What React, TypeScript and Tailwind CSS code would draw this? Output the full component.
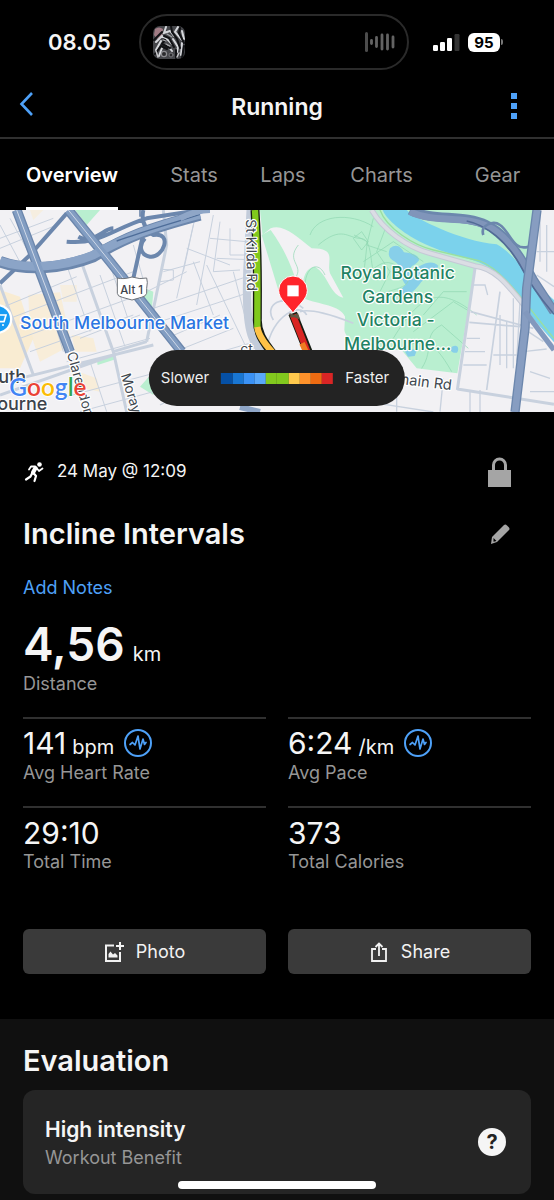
import type { ReactNode } from "react";

const blue = "#4ea1f8";

function StatusBar() {
  return (
    <div className="grid grid-cols-[1fr_270px_1fr] items-center pt-3.5 pr-1.5">
      <div className="pl-12 text-[22px] leading-7 font-semibold">08.05</div>
      <div className="flex h-14 items-center justify-between rounded-full border-2 border-[#2a2a2a] px-3">
        <Artwork />
        <svg width="30" height="20" viewBox="0 0 30 20" stroke="#636363" strokeLinecap="round" aria-hidden="true">
          <path d="M1.500 1.500v17" stroke="#4c4c4c" strokeWidth="3" />
          <path d="M6.500 8.500v3M11.500 5.500v9M17 3v14M22.500 3v14M28 5v10" strokeWidth="2.800" />
        </svg>
      </div>
      <div className="flex items-center gap-2 pl-6">
        <svg width="27" height="17" viewBox="0 0 27 17" fill="#fff" aria-hidden="true">
          <rect x="0" y="11" width="5" height="6" rx="1.200" />
          <rect x="7" y="8" width="5" height="9" rx="1.200" />
          <rect x="14" y="4" width="5" height="13" rx="1.200" />
          <rect x="21.500" y="0" width="5" height="17" rx="1.200" fill="#333" />
        </svg>
        <div className="flex items-center gap-px">
          <span className="flex h-[19px] w-8 items-center justify-center rounded-md bg-white text-[15px] leading-none font-bold text-black">95</span>
          <span className="h-1.5 w-0.5 rounded-r-full bg-[#777]" />
        </div>
      </div>
    </div>
  );
}

function Artwork() {
  return (
    <svg width="32" height="33" viewBox="0 0 32 33" aria-hidden="true">
      <clipPath id="art"><rect width="32" height="33" rx="7" /></clipPath>
      <g clipPath="url(#art)" fill="none" strokeLinecap="round">
        <rect width="32" height="33" fill="#45464a" />
        <path d="M2 3q4-3 8 0l-1 7-5 3-3-4z" fill="#a07b84" />
        <path d="M13 1l-2 6 6-2 4 5M25 1l-3 5 7 8M29 5l2 8M3 16l6-6 5 3 5 5M8 15l-5 9M20 13l5 8-1 5M29 17l-1 12M15 20l4 5M6 30l3-8" stroke="#d5d7db" strokeWidth="2" />
        <path d="M18 0l1 6 5 7 3 9M27 2l-1 5 5 10M1 14l8-8M11 10l5 2 5 9M12 14l-3 4 8 4M2 28l6-8 6 3M23 24v8M31 20l-2 12" stroke="#101114" strokeWidth="2" />
        <path d="M14 8l5 3M13 18l4 2M10 14l3 1" stroke="#a5a6aa" strokeWidth="1.200" />
        <circle cx="11" cy="28" r="2.600" fill="#2a2a2d" stroke="#8d8d91" strokeWidth="1.200" />
        <circle cx="18" cy="29" r="2" fill="#2a2a2d" stroke="#77777b" />
        <path d="M3 25l2 6M26 27l-2 4" stroke="#c6c6c9" strokeWidth="1.500" />
      </g>
    </svg>
  );
}

function Header() {
  return (
    <header className="grid h-[69px] grid-cols-[1fr_auto_1fr] items-center border-b-2 border-[#303030] px-4">
      <button type="button" aria-label="Back" className="flex h-10 w-6 items-center">
        <svg width="20" height="26" viewBox="0 0 20 26" fill="none" stroke={blue} strokeWidth="2.600">
          <path d="M16 2L5.500 13 16 24" />
        </svg>
      </button>
      <h1 className="pt-1.5 text-[23px] leading-8 font-semibold">Running</h1>
      <button type="button" aria-label="More" className="mr-2 flex h-10 w-8 items-center justify-center justify-self-end pt-1">
        <svg width="6" height="26" viewBox="0 0 6 26" fill={blue}>
          <path d="M0 0h6v6H0zM0 10h6v6H0zM0 20h6v6H0z" />
        </svg>
      </button>
    </header>
  );
}

function Tabs() {
  return (
    <nav className="grid h-[71px] grid-cols-[144fr_100fr_78fr_119fr_113fr] justify-items-center text-xl text-[#969696]">
      <a href="#overview" aria-current="page" className="flex items-center border-b-3 border-white pt-1 font-semibold text-white">Overview</a>
      {["Stats", "Laps", "Charts", "Gear"].map((t) => (
        <a key={t} href={"#" + t.toLowerCase()} className="flex items-center border-b-3 border-transparent pt-1">{t}</a>
      ))}
    </nav>
  );
}

const speedColors = ["bg-[#0550a5]", "bg-[#1976d2]", "bg-[#3b92f5]", "bg-[#59a8fb]", "bg-[#82c91e]", "bg-[#82c91e]", "bg-[#ffc94d]", "bg-[#ff922b]", "bg-[#ed6b12]", "bg-[#d92525]"];

function RouteMap() {
  return (
    <section aria-label="Route map" className="relative">
      <svg viewBox="0 15 1662 606" className="block w-full" fontFamily="Inter, sans-serif" aria-hidden="true">
        <rect y="15" width="1662" height="606" fill="#f2f1f4" />

        <g fill="#f9ecd2">
          <path d="M0 255L60 275 100 400 60 490 0 490z" />
          <path d="M85 270L180 262 215 420 120 470 90 380zM215 390L280 400 290 440 225 440zM235 500L290 520 300 560 250 550z" opacity=".8" />
          <path d="M90 15h40l-30 30zM180 240h50v50h-40z" opacity=".6" />
        </g>
        <g fill="#b9efd0">
          <path d="M225 15h75l-40 45zM435 250l25 10-5 60-30-10zM290 463l55-17 2 17-54 17zM420 545l40-45v70z" />
          <path d="M780 15H1605L1590 170 1560 240 1440 180 1427 190 1372 505 1250 490 1205 435 1030 435 1035 335 920 285 850 260 820 215 787 85z" />
        </g>
        <path d="M812 70C850 55 890 95 935 130C1015 130 978 170 990 205L1030 278C990 270 985 210 945 185C910 190 905 230 910 280C960 300 1020 300 1035 335C1030 370 1020 380 1080 435H790L787 90z" fill="#f2f1f4" />
        <path d="M785 90L835 255L865 290L905 275C885 230 880 170 812 75z" fill="#b9efd0" />
        <path d="M1170 130c20-18 35-2 42 12 22 2 46 8 45 24-14 20-28 12-26 34 30-18 60-40 84-18-12 32-30 24-52 50-26 38-36 26-52 60-30 6-14-40 6-52-20-26-14-60-32-70-20-10-22-22-15-40z" fill="#87cfe9" />
        <path d="M1212 435l40-2-8 20-20 2zM1356 425c20-10 22 10 15 18-18 2-24-10-15-18z" fill="#87cfe9" />

        <g fill="none" stroke="#8ed6b1" strokeWidth="2">
          <path d="M895 120c-40 50 20 60-10 100M915 245c0-60 40-80 60-35M930 90c20-60 120-70 190-25M955 120c70-60 90-20 125-20s30 60 40 100M1060 100l25-20 20 30-20 25zM1090 170l90-60 90 60M1060 190c50 60 70-60 140 0s-30 60-60 80M1120 40l-20 80 60 20M1180 400c90-150 150-150 250-70M1205 435c60-40 90-40 150 65M1270 330l60-70 70 0M1240 380l120-90 50 30M1265 490c40-60 0-100 60-130l80 70M1062 90l40 20-10 90M1160 60l-30 80 40 60-30 60" />
        </g>

        <g fill="none" stroke="#c8d1de" strokeWidth="4">
          <path d="M0 100L160 40M0 130L170 60M0 310L230 215M30 340L400 200M60 400L390 280M90 440L400 330M240 400L420 330M200 470L450 400M180 580L480 500M240 620L460 560M0 60l70 130M30 40l60 110M200 180l70 200M300 210l75 215M330 180l60 180M130 240l60 200M270 470l50 150M400 120L440 260 560 200M460 310L740 215M480 350L770 255M490 200L600 170M530 280L580 60M590 15L550 200M640 30L590 300M660 50L640 200 720 195M690 70V150L740 150M580 170L640 330M620 180L740 430M700 200L760 430M500 400L660 330M550 430L700 370M560 470L800 400M630 100L740 110M650 160L770 165M560 130L690 180M480 230l40-5v-30l-35-2" strokeWidth="3" />
          <path d="M240 160L340 440 380 621M0 240L100 510M60 520L460 420M0 570L340 450M340 440L440 410M490 15L500 120 440 410M1425 190L1372 555M1372 552L1662 598" strokeWidth="9" />
          <path d="M1500 260L1460 555M1412 320L1600 370M1408 352L1560 365M800 430C820 330 900 290 920 330M820 345C790 300 850 260 910 310M900 320C930 310 1000 330 1060 355" strokeWidth="5" />
          <path d="M1420 240h35l8 30M1400 400h40M1395 440h60M1390 480h70M1480 450h70M1500 330V480M1540 280V490M1520 350V490M1560 290l-10 180M1570 370l60 40M1570 440l70-8M1590 500l60 20M1590 560h72M1610 210l52 35M1610 140h52M1620 15V170M1640 60v140M1440 555V621M1410 560V621M1190 560v60M1100 590l200 31M1330 520l-10 100M600 540l220 60M480 600l200-100" strokeWidth="4" />
        </g>

        <path d="M1148 15H1220C1245 40 1380 108 1490 118C1540 145 1570 200 1662 285V412C1610 350 1540 280 1500 215C1450 155 1370 165 1260 110C1210 85 1160 45 1148 15z" fill="#7bd2ec" />
        <path d="M1140 15C1160 70 1240 120 1300 135L1440 168C1510 195 1570 290 1662 400" fill="none" stroke="#9adf9f" strokeWidth="4" />
        <path d="M1115 15C1150 75 1220 125 1290 145L1425 183C1490 190 1530 250 1580 310" fill="none" stroke="#c4c9d6" strokeWidth="17" />
        <path d="M1115 15C1150 75 1220 125 1290 145L1425 183C1490 190 1530 250 1580 310" fill="none" stroke="#dbdde4" strokeWidth="11" />

        <g fill="none" stroke="#6c87ad" strokeLinejoin="round">
          <path d="M0 235L90 150L200 25M200 110C300 120 340 70 440 40L600 15M430 15C420 60 450 85 460 90C520 80 490 160 450 155C420 150 415 120 435 100M400 220L430 85M235 95C280 120 310 70 340 70" strokeWidth="12" />
          <path d="M50 15L210 440M205 15L330 170L545 440" strokeWidth="30" />
          <path d="M0 170C80 200 190 190 280 155C380 95 450 70 600 30" strokeWidth="34" />
          <path d="M0 168C80 196 190 186 280 150C380 95 450 68 600 28" stroke="#8ba4c7" strokeWidth="26" />
          <path d="M50 15L210 440M205 15L330 170L545 440" stroke="#829dc2" strokeWidth="22" />
          <path d="M50 15L210 440M205 15L330 170L545 440" stroke="#d0d9e8" strokeWidth="3" />
          <path d="M350 108C430 80 500 60 600 28M420 35V15" stroke="#4e6d99" strokeWidth="4" />
          <path d="M1230 15C1300 50 1390 25 1460 60C1510 80 1560 150 1600 225L1662 320" strokeWidth="28" />
          <path d="M1230 20C1300 55 1390 30 1460 63C1510 83 1560 150 1600 225L1662 320" stroke="#8095ba" strokeWidth="20" />
          <path d="M1400 48C1460 60 1520 110 1560 180C1590 240 1630 290 1662 328" stroke="#526b96" strokeWidth="5" />
          <path d="M1450 90C1440 60 1480 45 1500 60C1530 80 1540 140 1585 125L1600 110" strokeWidth="8" />
          <path d="M1611 15L1580 250L1575 370L1545 621" strokeWidth="28" />
          <path d="M1611 15L1580 250L1575 370L1545 621" stroke="#879dc1" strokeWidth="20" />
          <path d="M1575 320L1662 435" stroke="#8298bd" strokeWidth="16" />
          <path d="M540 40Q590 15 630 15M720 606L780 621" stroke="#8fa6c7" strokeWidth="18" />
        </g>

        <path d="M752 15L742 200C735 400 760 420 810 455" fill="none" stroke="#c3ccda" strokeWidth="25" />
        <g fill="none">
          <path d="M765 15C775 180 772 210 772 340C770 380 785 405 825 455M878 325L930 455" stroke="#171d13" strokeWidth="27" />
          <path d="M765 15C775 180 772 210 772 370" stroke="#80c91c" strokeWidth="19" />
          <path d="M772 366C775 390 790 415 830 455" stroke="#ffc247" strokeWidth="19" />
          <path d="M879 330L928 455" stroke="#d92522" strokeWidth="19" />
          <path d="M906 415L925 455" stroke="#ef7b21" strokeWidth="17" />
          <path d="M868 327l28 12-5-14M872 335l20-4" stroke="#615844" strokeWidth="6" />
        </g>
        <path d="M879 324C863 299 836 283 836 256A43 43 0 0 1 922 256C922 283 895 299 879 324Z" fill="#ff252b" stroke="#fff" strokeWidth="3" />
        <rect x="862" y="241" width="34" height="33" fill="#fff" />

        <path d="M352 219Q370 224 396 216Q421 224 440 219Q444 230 440 250V265Q438 274 424 277L396 285L367 277Q352 274 352 265z" fill="#fff" stroke="#70747a" strokeWidth="3" />
        <text x="361" y="266" fontSize="34" fontWeight="500" fill="#3d434b">Alt 1</text>
        <circle cx="-8" cy="342" r="45" fill="#fff" />
        <circle cx="-8" cy="342" r="38" fill="#159cf4" />
        <path d="M-4 330H18l-6 20H-4M6 360h6" fill="none" stroke="#fff" strokeWidth="5" />

        <g paintOrder="stroke" stroke="#fff" strokeLinejoin="round" fill="#414850" strokeWidth="7">
          <text x="60" y="371" fontSize="53" fontWeight="500" fill="#2b76e2">South Melbourne Market</text>
          <text x="-38" y="535" fontSize="54" fontWeight="500" fill="#3d434b">outh</text>
          <text x="-42" y="614" fontSize="54" fontWeight="500" fill="#3d434b">bourne</text>
          <text transform="translate(200 445) rotate(74)" fontSize="41">Clarendon St</text>
          <text transform="translate(362 510) rotate(73)" fontSize="41">Moray St</text>
          <text transform="translate(738 43) rotate(89)" fontSize="42">St Kilda Rd</text>
          <text x="721" y="447" fontSize="42">ct</text>
          <text transform="translate(1162 532) rotate(7)" fontSize="44">omain Rd</text>
          <g fill="#1f8364" fontSize="53" fontWeight="500" textAnchor="middle">
            <text x="1193" y="222">Royal Botanic</text>
            <text x="1193" y="293">Gardens</text>
            <text x="1187" y="364">Victoria -</text>
            <text x="1193" y="435">Melbourne…</text>
          </g>
        </g>
        <text x="28" y="572" fontSize="73" fontWeight="600" fontFamily="Lato, sans-serif" paintOrder="stroke" stroke="#fff" strokeWidth="5">
          <tspan fill="#4285f4">G</tspan><tspan fill="#ea4335">o</tspan><tspan fill="#fbbc05">o</tspan><tspan fill="#4285f4">g</tspan><tspan fill="#34a853">l</tspan><tspan fill="#ea4335">e</tspan>
        </text>
      </svg>
      <div className="absolute bottom-1.5 left-1/2 flex h-14 -translate-x-1/2 items-center gap-3 rounded-full bg-[#232323] pr-4 pl-3 text-[15px] text-[#eee]">
        <span>Slower</span>
        <span className="flex h-[11px] w-28">
          {speedColors.map((c, i) => <i key={i} className={"flex-1 " + c} />)}
        </span>
        <span>Faster</span>
      </div>
    </section>
  );
}

function PulseIcon() {
  return (
    <svg width="28" height="28" viewBox="0 0 28 28" fill="none" stroke={blue} aria-hidden="true">
      <circle cx="14" cy="14" r="13" strokeWidth="2" />
      <path d="M6 15.500l2.500-2 2.500 2.500 3-9 2 13 3-10 1.500 5.500 1.500-2" strokeWidth="1.700" strokeLinejoin="round" strokeLinecap="round" />
    </svg>
  );
}

function Stat({ value, unit, label, pulse }: { value: string; unit?: string; label: string; pulse?: boolean }) {
  return (
    <div className="flex h-[89px] flex-col border-t-2 border-[#303030] pt-2">
      <div className="flex h-8 items-center gap-2.5">
        <div className="flex items-baseline gap-1.5 pt-0.5">
          <span className="text-3xl leading-8">{value}</span>
          {unit && <span className="text-xl">{unit}</span>}
        </div>
        {pulse && <PulseIcon />}
      </div>
      <div className="pt-0.5 text-lg leading-6 text-[#969696]">{label}</div>
    </div>
  );
}

function ActionButton({ icon, children }: { icon: ReactNode; children: ReactNode }) {
  return (
    <button type="button" className="flex h-[45px] items-center justify-center gap-3 rounded-md bg-[#3a3a3a] text-lg text-[#f2f2f2]">
      {icon}
      {children}
    </button>
  );
}

export default function App() {
  return (
    <main className="min-h-screen overflow-x-hidden bg-black font-['Inter',sans-serif] text-[#f5f5f5]">
      <StatusBar />
      <Header />
      <Tabs />
      <RouteMap />
      <section className="px-[23px] pt-11 pb-[45px]">
        <div className="flex h-8 items-center justify-between">
          <div className="flex items-center gap-3 text-[17px]">
            <svg width="22" height="22" viewBox="0 0 22 22" fill="none" stroke="#fff" strokeLinecap="round" strokeLinejoin="round" aria-hidden="true">
              <circle cx="16.500" cy="3.500" r="2.300" fill="#fff" stroke="none" />
              <path d="M12.500 7L10 11.500" strokeWidth="4.200" />
              <path d="M12 5.500L8 5.500 6 8.500M14 7.500l2 2.500 3.500-2.500" strokeWidth="1.800" />
              <path d="M10.500 12l2.500 3-1.500 5M9 12.500L7.500 15.500 3 18.500" strokeWidth="2.200" />
            </svg>
            <span>24 May @ 12:09</span>
          </div>
          <button type="button" aria-label="Privacy" className="mr-5">
            <svg width="23" height="30" viewBox="0 0 23 30" fill="none">
              <path d="M5.500 15V8a6 6 0 0 1 12 0v7" stroke="#a5a5a5" strokeWidth="3" />
              <path d="M0 13h23v17H0z" fill="#a5a5a5" />
            </svg>
          </button>
        </div>
        <div className="mt-[26px] flex h-10 items-center justify-between">
          <h2 className="text-[29px] leading-10 font-semibold">Incline Intervals</h2>
          <button type="button" aria-label="Edit name" className="mr-5">
            <svg width="20" height="20" viewBox="0 0 20 20">
              <path d="M0 20L1 13 13 1Q14.500 0 16 1.500L18 3.500Q19 5 18 6L6 18z" fill="#a5a5a5" />
              <path d="M2.500 14l3 3-3 .8z" fill="#000" />
            </svg>
          </button>
        </div>
        <button type="button" className="mt-5 block text-lg leading-7 text-[#4ea1f8]">Add Notes</button>
        <div className="mt-3.5 flex items-baseline gap-2">
          <span className="text-[46px] leading-[56px] font-semibold">4,56</span>
          <span className="text-xl">km</span>
        </div>
        <div className="text-lg leading-6 text-[#969696]">Distance</div>
        <div className="mt-[21px] grid grid-cols-2 gap-x-[22px]">
          <Stat value="141" unit="bpm" label="Avg Heart Rate" pulse />
          <Stat value="6:24" unit="/km" label="Avg Pace" pulse />
          <Stat value="29:10" label="Total Time" />
          <Stat value="373" label="Total Calories" />
        </div>
        <div className="mt-[34px] grid grid-cols-2 gap-x-[22px]">
          <ActionButton
            icon={
              <svg width="20" height="20" viewBox="0 0 20 20" fill="none" stroke="currentColor" strokeWidth="2" aria-hidden="true">
                <path d="M10 3.500H2V19h14v-9M16 0v8M12 4h8" />
                <path d="M4.500 15.500V12l2-2.500 2.500 3 2-1.500 2.500 2.500v2z" fill="currentColor" stroke="none" />
              </svg>
            }
          >
            Photo
          </ActionButton>
          <ActionButton
            icon={
              <svg width="20" height="20" viewBox="0 0 20 20" fill="none" stroke="currentColor" strokeWidth="1.800" aria-hidden="true">
                <path d="M7 7H3v12h14V7h-4M10 14V2M6.500 5L10 1.500 13.500 5" />
              </svg>
            }
          >
            Share
          </ActionButton>
        </div>
      </section>
      <section className="bg-[#101010] px-[23px] pt-[22px] pb-1.5">
        <h2 className="text-[29px] leading-10 font-semibold">Evaluation</h2>
        <div className="mt-[9px] flex h-[104px] items-center justify-between rounded-xl bg-[#252525] pr-[25px] pl-[22px]">
          <div>
            <h3 className="text-[21px] leading-8 font-semibold">High intensity</h3>
            <p className="text-lg leading-6 text-[#969696]">Workout Benefit</p>
          </div>
          <button type="button" aria-label="About workout benefit" className="flex size-7 items-center justify-center rounded-full bg-[#f5f5f5] text-xl font-bold text-[#222]">?</button>
        </div>
      </section>
      <div className="fixed bottom-[11px] left-1/2 h-2 w-[198px] -translate-x-1/2 rounded-full bg-white" />
    </main>
  );
}
